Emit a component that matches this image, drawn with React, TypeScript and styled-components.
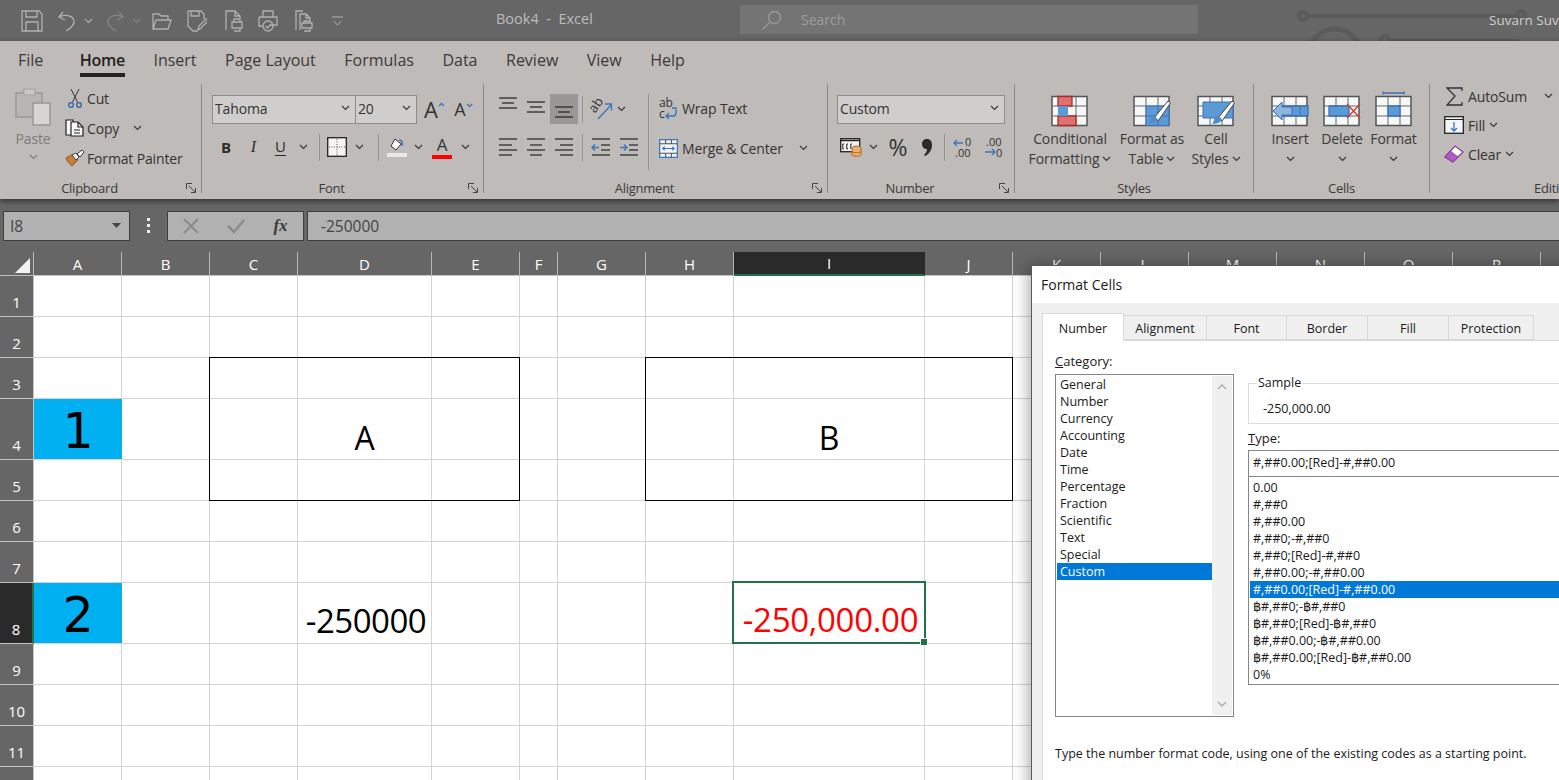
import React from 'react';
import styled, { createGlobalStyle } from 'styled-components';

const uiFont = '"Open Sans", "Noto Sans", sans-serif';

const GlobalStyle = createGlobalStyle`
  html, body { margin: 0; padding: 0; background: #666; }
  body { font-family: ${uiFont}; }
  * { box-sizing: border-box; }
`;

const Page = styled.div`
  position: relative;
  width: 1559px;
  height: 780px;
  overflow: hidden;
  display: flex;
  flex-direction: column;
  background: #666;
`;

/* title bar */
const TitleBar = styled.div`
  position: relative;
  height: 41px;
  flex: none;
  display: flex;
  align-items: center;
  background: #666;
  color: #c4c4c4;
`;
const Qat = styled.div`
  width: 490px;
  flex: none;
  display: flex;
  align-items: center;
  padding-left: 20px;
  height: 100%;
`;
const QatIcon = styled.span<{ $w: number; $ml?: number }>`
  width: ${p => p.$w}px;
  margin-left: ${p => p.$ml ?? 0}px;
  flex: none;
  display: flex;
  justify-content: center;
  align-items: center;
`;
const DocTitle = styled.div`
  width: 250px;
  flex: none;
  padding: 0 0 5px 6px;
  font-size: 14.5px;
  color: #bcbcbc;
  white-space: pre;
`;
const SearchBox = styled.div`
  width: 458px;
  height: 29px;
  flex: none;
  margin-bottom: 2px;
  background: #747474;
  display: flex;
  align-items: center;
  padding-left: 22px;
  gap: 19px;
  color: #9d9d9d;
  font-size: 14px;
`;
const UserName = styled.div`
  margin-left: 291px;
  padding-bottom: 1px;
  font-size: 13.5px;
  white-space: nowrap;
  color: #cfcfcf;
  z-index: 1;
`;
const Circuit = styled.svg`
  position: absolute;
  left: 1280px;
  top: 0;
`;

/* ribbon */
const Ribbon = styled.div`
  height: 158px;
  flex: none;
  background: #bfbbb8;
  color: #333;
  box-shadow: 0 2px 6px rgba(0, 0, 0, 0.55);
  position: relative;
  z-index: 2;
`;
const TabRow = styled.div`
  height: 39px;
  display: flex;
  padding-left: 18px;
  gap: 28.5px;
`;
const RibbonTab = styled.div<{ $active?: boolean }>`
  height: 36px;
  padding-top: 1px;
  line-height: 36px;
  font-size: 16px;
  margin-left: ${p => (p.$active ? '8px' : '0')};
  color: ${p => (p.$active ? '#222' : '#3a3a3a')};
  font-weight: ${p => (p.$active ? 600 : 400)};
  letter-spacing: ${p => (p.$active ? '-0.3px' : '0')};
  border-bottom: ${p => (p.$active ? '4px solid #222' : 'none')};
`;
const Groups = styled.div`
  display: flex;
  padding-top: 4px;
  height: 115px;
`;
const Group = styled.div<{ $w: number; $last?: boolean }>`
  width: ${p => p.$w}px;
  flex: none;
  height: 109px;
  display: flex;
  flex-direction: column;
  border-right: ${p => (p.$last ? 'none' : '1px solid #8b8987')};
`;
const GroupBody = styled.div<{ $pad?: number }>`
  flex: 1;
  min-height: 0;
  display: flex;
  padding-left: ${p => p.$pad ?? 10}px;
`;
const GroupFooter = styled.div`
  height: 19px;
  padding-top: 9px;
  display: flex;
  align-items: center;
  font-size: 13px;
  letter-spacing: -0.25px;
  color: #3a3a3a;
`;
const GroupName = styled.div<{ $inset?: number }>`
  flex: 1;
  text-align: ${p => (p.$inset ? 'left' : 'center')};
  padding-left: ${p => p.$inset ?? 0}px;
  white-space: nowrap;
`;
const Launcher = styled.svg`
  width: 22px;
  flex: none;
  padding: 0 5px 0 7px;
`;
const Stack = styled.div<{ $w?: number }>`
  width: ${p => (p.$w ? `${p.$w}px` : 'auto')};
  flex: none;
  display: flex;
  flex-direction: column;
  padding-top: 10px;
  gap: 8px;
`;
const ToolRow = styled.div<{ $shift?: number }>`
  display: flex;
  align-items: center;
  height: 30px;
  margin-left: ${p => p.$shift ?? 0}px;
`;
const Tool = styled.div<{ $w?: number; $on?: boolean }>`
  width: ${p => (p.$w ? `${p.$w}px` : 'auto')};
  height: 30px;
  flex: none;
  display: flex;
  align-items: center;
  justify-content: center;
  background: ${p => (p.$on ? '#9a9896' : 'transparent')};
`;
const Divider = styled.div<{ $h?: number; $mx?: number }>`
  width: 1px;
  height: ${p => p.$h ?? 27}px;
  flex: none;
  margin: 0 ${p => p.$mx ?? 7}px;
  background: #979593;
`;
const TallDivider = styled(Divider)`
  margin: 10px 0 0 0;
`;
const RightTools = styled.div`
  flex: none;
  display: flex;
  flex-direction: column;
  padding: 10px 0 0 10px;
  gap: 8px;
`;
const TextTool = styled.div`
  height: 30px;
  display: flex;
  align-items: center;
  gap: 4px;
  padding-bottom: 1px;
  font-size: 14px;
  letter-spacing: -0.15px;
  white-space: nowrap;
`;
const MergeTool = styled(TextTool)`
  padding: 2px 0 0;
`;
const Chevron: React.FC<{ c?: string }> = ({ c = '#3a3a3a' }) => (
  <svg width="9" height="6" viewBox="0 0 9 6" style={{ flex: 'none' }}>
    <path d="M1 1l3.500 3.500L8 1" fill="none" stroke={c} strokeWidth="1.200" />
  </svg>
);
const LauncherIcon = () => (
  <Launcher viewBox="0 0 10 10" height="10">
    <path d="M.5 6V.5H6M3 3l6 6M5 9.500h4.500V5" fill="none" stroke="#444" strokeWidth="1" />
  </Launcher>
);

const PasteColumn = styled.div`
  width: 38px;
  flex: none;
  display: flex;
  flex-direction: column;
  align-items: center;
  padding-top: 4px;
  color: #7e7c7a;
  font-size: 14px;
  letter-spacing: -0.15px;
  line-height: 20px;
`;
const PasteLabel = styled.span`
  margin-top: 3px;
`;
const PasteChevron = styled.span`
  margin-top: 1px;
  line-height: 10px;
`;
const ClipRows = styled.div`
  margin: -1px 0 0 10px;
  display: flex;
  flex-direction: column;
`;
const ClipRow = styled.div`
  height: 30px;
  display: flex;
  align-items: center;
  font-size: 14px;
  letter-spacing: -0.15px;
  white-space: nowrap;
`;
const ClipIcon = styled.span`
  width: 25px;
  flex: none;
  display: flex;
  justify-content: center;
`;
const ChevronGap = styled.span<{ $ml: number }>`
  margin-left: ${p => p.$ml}px;
  display: flex;
`;
const Combo = styled.div<{ $w: number }>`
  width: ${p => p.$w}px;
  height: 29px;
  flex: none;
  display: flex;
  align-items: center;
  justify-content: space-between;
  padding: 0 5px 2px 2px;
  background: #cfcecd;
  border: 1px solid #8f8d8b;
  margin-right: -1px;
  font-size: 14px;
  letter-spacing: -0.15px;
  color: #333;
`;
const Spacer = styled.span<{ $w: number }>`
  width: ${p => p.$w}px;
  flex: none;
`;
const FontSizer = styled.div<{ $size: number }>`
  width: 29px;
  flex: none;
  display: flex;
  align-items: flex-start;
  justify-content: center;
  font-size: ${p => p.$size}px;
  line-height: 24px;
  color: #333;
`;
const BoldGlyph = styled.span`
  font: 700 15px ${uiFont};
  color: #2c2c2c;
`;
const ItalicGlyph = styled.span`
  font: italic 400 16px "Liberation Serif", serif;
  color: #2c2c2c;
`;
const UnderGlyph = styled.span`
  font-size: 15px;
  line-height: 17px;
  border-bottom: 1px solid #2c2c2c;
  color: #2c2c2c;
`;
const ColorA = styled.div<{ $bar: string; $w: number }>`
  width: ${p => p.$w}px;
  display: flex;
  flex-direction: column;
  align-items: center;
  font-size: 17px;
  line-height: 20px;
  color: #333;
  border-bottom: 4px solid ${p => p.$bar};
`;
const BigButton = styled.div<{ $w: number }>`
  width: ${p => p.$w}px;
  flex: none;
  display: flex;
  flex-direction: column;
  align-items: center;
  padding-top: 8px;
  font-size: 14px;
  letter-spacing: -0.1px;
  line-height: 20px;
  color: #3a3a3a;
  white-space: nowrap;
`;
const BigIcon = styled.div`
  height: 37px;
  display: flex;
  align-items: flex-start;
`;
const BigLine = styled.div`
  display: flex;
  align-items: center;
  gap: 3px;
  height: 20px;
`;
const EditRows = styled.div`
  width: 100%;
  display: flex;
  flex-direction: column;
  gap: 5px;
`;
const EditRow = styled.div`
  height: 24px;
  display: flex;
  align-items: center;
  font-size: 14px;
  letter-spacing: -0.15px;
  gap: 4px;
  white-space: nowrap;
`;
const EditIcon = styled.span`
  width: 20px;
  flex: none;
  display: flex;
  justify-content: center;
`;
const Percent = styled.span`
  font-size: 23px;
  line-height: 24px;
  color: #333;
`;

/* formula bar */
const FormulaBar = styled.div`
  height: 53px;
  flex: none;
  display: flex;
  align-items: center;
  padding-left: 3px;
`;
const FieldBox = styled.div<{ $w: number; $ml?: number }>`
  width: ${p => p.$w}px;
  margin-left: ${p => p.$ml ?? 0}px;
  height: 30px;
  flex: none;
  display: flex;
  align-items: center;
  background: #b1b1b1;
  border: 1px solid #3f3f3f;
  color: #444;
  font-size: 15.5px;
`;
const NameText = styled.span`
  flex: 1;
  padding-left: 6px;
`;
const GripDots = styled.div`
  width: 37px;
  flex: none;
  display: flex;
  flex-direction: column;
  align-items: center;
  gap: 3px;
  i {
    width: 3px;
    height: 3px;
    background: #eee;
  }
`;
const FxButton = styled.span`
  width: 45px;
  flex: none;
  display: flex;
  justify-content: center;
`;
const FxGlyph = styled.span`
  font: italic 700 17px "Liberation Serif", serif;
  color: #3a3a3a;
`;
const FormulaText = styled.span`
  padding-left: 13px;
`;

/* sheet */
const colWidths = [34, 88, 88, 88, 134, 88, 38, 88, 88, 191, 88, 88, 88, 88, 88, 88, 88, 88];
const rowHeights = [24, 41, 41, 41, 61, 41, 41, 41, 61, 41, 41, 41, 41];
const colNames = 'ABCDEFGHIJKLMNOPQ'.split('');

const SheetGrid = styled.div`
  flex: none;
  display: grid;
  grid-template-columns: ${colWidths.map(w => `${w}px`).join(' ')};
  grid-template-rows: ${rowHeights.map(h => `${h}px`).join(' ')};
  background: #fff;
`;
const Corner = styled.div`
  grid-column: 1;
  grid-row: 1;
  background: #666;
  border-right: 1px solid #bdbdbd;
  border-bottom: 1px solid #bdbdbd;
  display: flex;
  align-items: flex-end;
  justify-content: flex-end;
  padding: 0 3px 2px 0;
`;
const ColHead = styled.div<{ $c: number; $on?: boolean }>`
  grid-column: ${p => p.$c};
  grid-row: 1;
  display: flex;
  align-items: center;
  justify-content: center;
  font-size: 15px;
  color: #fff;
  background: ${p => (p.$on ? '#2a2a2a' : '#666')};
  border-right: 1px solid ${p => (p.$on ? '#2a2a2a' : '#b5b5b5')};
  border-bottom: ${p => (p.$on ? '2px solid #217346' : '1px solid #c4c4c4')};
`;
const RowHead = styled.div<{ $r: number; $on?: boolean }>`
  grid-column: 1;
  grid-row: ${p => p.$r};
  display: flex;
  align-items: flex-end;
  justify-content: center;
  padding-bottom: 4px;
  font-size: 15px;
  color: #fff;
  background: ${p => (p.$on ? '#2a2a2a' : '#666')};
  border-bottom: 1px solid #c4c4c4;
  border-right: ${p => (p.$on ? '2px solid #217346' : '1px solid #c4c4c4')};
`;
const Cell = styled.div<{ $c: number; $r: number }>`
  grid-column: ${p => p.$c};
  grid-row: ${p => p.$r};
  border-right: 1px solid #d4d4d4;
  border-bottom: 1px solid #d4d4d4;
`;
const Filled = styled.div<{ $r: number }>`
  grid-column: 2;
  grid-row: ${p => p.$r};
  background: #00b0f0;
  display: flex;
  align-items: center;
  justify-content: center;
  padding-top: 4px;
  font: 49px "DejaVu Sans", sans-serif;
  color: #000;
  margin-bottom: 1px;
  z-index: 1;
`;
const OutlineBox = styled.div<{ $from: number; $to: number }>`
  grid-column: ${p => p.$from} / ${p => p.$to};
  grid-row: 4 / 7;
  margin: -1px 0 0 -1px;
  border: 1px solid #000;
  display: flex;
  align-items: center;
  justify-content: center;
  padding-top: 16px;
  font-size: 32px;
  color: #000;
  z-index: 1;
`;
const NumberCell = styled.div<{ $c: number }>`
  grid-column: ${p => p.$c};
  grid-row: 9;
  display: flex;
  align-items: center;
  justify-content: center;
  padding: 13px 0 0 2px;
  font-size: 33px;
  letter-spacing: -0.5px;
  white-space: nowrap;
  z-index: 1;
`;
const SelectedCell = styled(NumberCell)`
  position: relative;
  margin: -2px -1px 0 -2px;
  border: 2px solid #217346;
  color: #ff0000;
  padding: 14px 0 0 3px;
  letter-spacing: -0.3px;
  z-index: 2;
`;
const FillHandle = styled.i`
  position: absolute;
  right: -3px;
  bottom: -3px;
  width: 6px;
  height: 6px;
  background: #217346;
  outline: 1px solid #fff;
`;

/* format cells dialog */
const Dialog = styled.div`
  position: absolute;
  left: 1031px;
  top: 265px;
  width: 620px;
  height: 540px;
  background: #f0f0f0;
  border-left: 1px solid #5a5a5a;
  border-top: 1px solid #5a5a5a;
  box-shadow: -3px 0 14px rgba(0, 0, 0, 0.32);
  font-size: 13px;
  color: #1a1a1a;
  z-index: 3;
  display: flex;
  flex-direction: column;
`;
const DialogTitle = styled.div`
  height: 37px;
  flex: none;
  background: #fff;
  padding: 0 0 0 9px;
  line-height: 37px;
  font-size: 14px;
`;
const DialogTabs = styled.div`
  display: flex;
  align-items: flex-end;
  height: 37px;
  flex: none;
  padding-left: 10px;
  position: relative;
  z-index: 1;
`;
const DialogTab = styled.div<{ $w: number; $on?: boolean }>`
  width: ${p => p.$w}px;
  height: ${p => (p.$on ? 28 : 25)}px;
  margin-bottom: ${p => (p.$on ? -1 : 0)}px;
  flex: none;
  display: flex;
  align-items: center;
  justify-content: center;
  background: ${p => (p.$on ? '#fff' : '#f0f0f0')};
  border: 1px solid #d9d9d9;
  border-left: ${p => (p.$on ? '1px solid #d9d9d9' : 'none')};
  border-bottom: ${p => (p.$on ? 'none' : '1px solid #d9d9d9')};
  font-size: 12.5px;
  padding-top: 1px;
`;
const TabPanel = styled.div`
  flex: 1;
  margin-left: 10px;
  background: #fff;
  border-top: 1px solid #d9d9d9;
  border-left: 1px solid #d9d9d9;
  display: flex;
  flex-direction: column;
  padding: 12px 0 0 12px;
`;
const PanelColumns = styled.div`
  display: flex;
  gap: 14px;
  height: 376px;
`;
const CategoryColumn = styled.div`
  width: 179px;
  flex: none;
`;
const FieldLabel = styled.div`
  height: 22px;
  font-size: 13px;
  line-height: 16px;
  u { text-decoration: underline; }
`;
const ListFrame = styled.div`
  height: 343px;
  margin-top: -1px;
  border: 1px solid #82878c;
  display: flex;
  padding: 1px;
  background: #fff;
`;
const ListBody = styled.div`
  flex: 1;
  display: flex;
  flex-direction: column;
`;
const ListItem = styled.div<{ $pad: number; $on?: boolean }>`
  height: 17px;
  flex: none;
  line-height: 17px;
  padding-left: ${p => p.$pad}px;
  font-size: 12.5px;
  white-space: nowrap;
  background: ${p => (p.$on ? '#0078d7' : 'transparent')};
  color: ${p => (p.$on ? '#fff' : '#1a1a1a')};
`;
const ScrollTrack = styled.div`
  width: 20px;
  flex: none;
  background: #f0f0f0;
  display: flex;
  flex-direction: column;
  align-items: center;
  justify-content: space-between;
  padding: 8px 0;
`;
const TypeColumn = styled.div`
  flex: 1;
  display: flex;
  flex-direction: column;
  padding-top: 30px;
`;
const SampleSet = styled.fieldset`
  margin: 0;
  height: 41px;
  flex: none;
  padding: 0 0 0 14px;
  border: 1px solid #dcdcdc;
  font-size: 12.5px;
  legend {
    margin-left: -6px;
    padding: 0 1px;
    height: 0;
    line-height: 0;
    font-size: 12.5px;
    transform: translateY(-1px);
  }
  div {
    line-height: 50px;
    height: 39px;
  }
`;
const TypeLabel = styled(FieldLabel)`
  height: 26px;
  padding-top: 5px;
  line-height: 18px;
  flex: none;
`;
const TypeInput = styled.div`
  height: 27px;
  flex: none;
  border: 1px solid #82878c;
  line-height: 24px;
  padding-left: 4px;
  font-size: 12.5px;
`;
const TypeList = styled.div`
  height: 209px;
  flex: none;
  margin-top: -1px;
  border: 1px solid #82878c;
  padding: 2px 1px 0;
  display: flex;
  flex-direction: column;
`;
const HelpText = styled.div`
  margin-top: 16px;
  font-size: 12.5px;
  white-space: nowrap;
`;

const grey = '#b0b0b0';

const GridIcon: React.FC<{ children?: React.ReactNode; w?: number }> = ({ children, w = 40 }) => (
  <svg width={w} height="35" viewBox="0 0 40 35" style={{ overflow: 'visible' }}>
    <rect x="2" y="4.500" width="35" height="29" fill="#f6f8f8" stroke="#555" strokeWidth="1.500" />
    <path d="M2 14h35M2 24h35M14 4.500v29M26 4.500v29" stroke="#666" strokeWidth="1" fill="none" />
    {children}
  </svg>
);
const Brush = () => (
  <g>
    <path d="M22 26L36 9l2.500 2L26 29z" fill="#fff" stroke="#444" strokeWidth="1" />
    <path d="M19 24c3 0 6 1 7 4-2 3-6 4-10 4 2-2 2-5 3-8z" fill="#4f8ecb" />
  </g>
);
/* lines are given in pixels from the top of the 30px tool they sit in */
const LinesIcon: React.FC<{ lines: [number, number, number][]; w?: number; c?: string; children?: React.ReactNode }> = ({ lines, w = 1.300, c = '#2a2a2a', children }) => (
  <svg width="20" height="30" viewBox="0 0 20 30" fill="none">
    {lines.map(([a, b, y], i) => (
      <path key={i} d={`M${a} ${y}H${b}`} stroke={c} strokeWidth={w} />
    ))}
    {children}
  </svg>
);
const rowLines = (xs: [number, number][]): [number, number, number][] =>
  xs.map(([a, b], i) => [a, b, [7, 13, 18, 23][i]]);

const Qa: React.FC<{ w?: number; children: React.ReactNode }> = ({ w = 20, children }) => (
  <svg width={w} height="22" viewBox={`0 0 ${w} 22`} fill="none" stroke={grey} strokeWidth="1.300">
    {children}
  </svg>
);

const categories = ['General', 'Number', 'Currency', 'Accounting', 'Date', 'Time', 'Percentage', 'Fraction', 'Scientific', 'Text', 'Special', 'Custom'];
const formats = [
  '0.00', '#,##0', '#,##0.00', '#,##0;-#,##0', '#,##0;[Red]-#,##0', '#,##0.00;-#,##0.00',
  '#,##0.00;[Red]-#,##0.00', '฿#,##0;-฿#,##0', '฿#,##0;[Red]-฿#,##0', '฿#,##0.00;-฿#,##0.00',
  '฿#,##0.00;[Red]-฿#,##0.00', '0%',
];
const dialogTabs: [string, number][] = [['Alignment', 83], ['Font', 80], ['Border', 81], ['Fill', 81], ['Protection', 85]];
const ribbonTabs = ['File', 'Home', 'Insert', 'Page Layout', 'Formulas', 'Data', 'Review', 'View', 'Help'];

const App: React.FC = () => (
  <Page>
    <GlobalStyle />
    <TitleBar>
      <Qat>
        <QatIcon $w={24}><Qa w={22}><path d="M1 1h17l3 3v17H1zM5 1v6h11V1M5 21v-9h12v9" /></Qa></QatIcon>
        <QatIcon $w={20} $ml={13}><Qa><path d="M6 2L2 7l6 3M2 7c5-3 14-2 15 4 .5 4-3 7-8 10" /></Qa></QatIcon>
        <QatIcon $w={10} $ml={6}><Chevron c="#aaa" /></QatIcon>
        <QatIcon $w={20} $ml={12}><Qa><path stroke="#858585" d="M14 2l4 5-6 3M18 7C13 4 4 5 3 11c-.5 4 3 7 8 10" /></Qa></QatIcon>
        <QatIcon $w={10} $ml={6}><Chevron c="#858585" /></QatIcon>
        <QatIcon $w={20} $ml={11}><Qa><path d="M1 19V4h6l2 2h7v4M1 19l3-9h15l-3 9z" /></Qa></QatIcon>
        <QatIcon $w={20} $ml={15}><Qa><path d="M1 1h13l3 3v5M1 1v15l5 5h5M4 1v5h8V1M11 20l1-4 7-7 2 2-7 7z" /></Qa></QatIcon>
        <QatIcon $w={20} $ml={17}><Qa><path d="M2 20V1h9l5 5v4M11 1v5h5M8 12h10v6H8zM10 12V9h6v3M10 21h6v-3" /></Qa></QatIcon>
        <QatIcon $w={20} $ml={14}><Qa><path d="M5 7V1h10v6M1 7h18v8h-7M1 7v9h4" /><circle cx="10" cy="16" r="5" /><path d="M7.500 16l2 2 3-3.500" /></Qa></QatIcon>
        <QatIcon $w={20} $ml={16}><Qa><path d="M2 20V1h7M6 20V4h6l4 4v3M12 4v4h4M8 13h10v5H8zM10 13v-2h6v2M10 21h6v-3" /></Qa></QatIcon>
        <QatIcon $w={11} $ml={18}><svg width="11" height="10" viewBox="0 0 11 10" fill="none" stroke={grey}><path d="M0 1h11M1.500 5l4 4 4-4" /></svg></QatIcon>
      </Qat>
      <DocTitle>{'Book4  -  Excel'}</DocTitle>
      <SearchBox>
        <svg width="20" height="20" viewBox="0 0 20 20" fill="none" stroke="#999" strokeWidth="1.300">
          <circle cx="12.500" cy="7.500" r="6" /><path d="M8 12l-7 7" />
        </svg>
        Search
      </SearchBox>
      <Circuit width="280" height="41" viewBox="0 0 280 41" fill="none" stroke="#5b5b5b" strokeWidth="4">
        <circle cx="23" cy="16" r="4" />
        <path d="M27 16h210" />
        <circle cx="241" cy="15" r="4" />
        <circle cx="55" cy="55" r="26" strokeWidth="5" />
        <circle cx="105" cy="40" r="4" />
        <path d="M109 41h130" />
      </Circuit>
      <UserName>Suvarn Suv</UserName>
    </TitleBar>

    <Ribbon>
      <TabRow>
        {ribbonTabs.map(t => <RibbonTab key={t} $active={t === 'Home'}>{t}</RibbonTab>)}
      </TabRow>
      <Groups>
        <Group $w={202}>
          <GroupBody $pad={14}>
            <PasteColumn>
              <svg width="36" height="38" viewBox="0 0 36 38">
                <path d="M1 5h8V2h10v3h8v24H1z" fill="#b8b6b3" stroke="#a3a19f" strokeWidth="2" />
                <rect x="9" y="1" width="11" height="6" fill="#c9c7c5" stroke="#a3a19f" />
                <rect x="18" y="15" width="17" height="22" fill="#d6d5d3" stroke="#9a9896" strokeWidth="1.500" />
              </svg>
              <PasteLabel>Paste</PasteLabel>
              <PasteChevron><Chevron c="#7e7c7a" /></PasteChevron>
            </PasteColumn>
            <ClipRows>
              <ClipRow>
                <ClipIcon>
                  <svg width="14" height="20" viewBox="0 0 14 20" fill="none" stroke="#333">
                    <path d="M3 1l6.500 13M11 1L4.500 14" />
                    <circle cx="3" cy="17" r="2.300" stroke="#2d5fa8" strokeWidth="1.300" />
                    <circle cx="11" cy="17" r="2.300" stroke="#2d5fa8" strokeWidth="1.300" />
                  </svg>
                </ClipIcon>Cut
              </ClipRow>
              <ClipRow>
                <ClipIcon>
                  <svg width="20" height="18" viewBox="0 0 20 18" fill="#f7f7f7" stroke="#222" strokeWidth="1.200">
                    <path d="M1 1h7v15H1z" /><path d="M6 3h7l5 5v9H6z" /><path d="M13 3v5h5M9 11h6M9 14h6" fill="none" />
                  </svg>
                </ClipIcon>Copy
                <ChevronGap $ml={14}><Chevron /></ChevronGap>
              </ClipRow>
              <ClipRow>
                <ClipIcon>
                  <svg width="20" height="18" viewBox="0 0 20 18">
                    <path d="M1 9l7-4 5 6-6 6C6 16 2 13 1 9z" fill="#c57f3c" stroke="#8a5a2a" />
                    <path d="M7 6l4-2 3 4-3 3z" fill="#f4f4f4" stroke="#444" />
                    <path d="M12 5l5-4 2 2-4 5z" fill="#fff" stroke="#333" />
                  </svg>
                </ClipIcon>Format Painter
              </ClipRow>
            </ClipRows>
          </GroupBody>
          <GroupFooter><GroupName>Clipboard</GroupName><LauncherIcon /></GroupFooter>
        </Group>

        <Group $w={282}>
          <GroupBody $pad={10}>
            <Stack>
              <ToolRow>
                <Combo $w={144}>Tahoma<Chevron /></Combo>
                <Combo $w={62}>20<Chevron /></Combo>
                <Spacer $w={4} />
                <FontSizer $size={22}>A<svg width="7" height="6" viewBox="0 0 7 6" style={{ marginTop: 5 }}><path d="M1 4l2.500-2.500L6 4" fill="none" stroke="#3b74bd" strokeWidth="1.300" /></svg></FontSizer>
                <FontSizer $size={18}>A<svg width="7" height="6" viewBox="0 0 7 6" style={{ marginTop: 5 }}><path d="M1 2l2.500 2.500L6 2" fill="none" stroke="#3b74bd" strokeWidth="1.300" /></svg></FontSizer>
              </ToolRow>
              <ToolRow>
                <Tool $w={28}><BoldGlyph>B</BoldGlyph></Tool>
                <Tool $w={27}><ItalicGlyph>I</ItalicGlyph></Tool>
                <Tool $w={27}><UnderGlyph>U</UnderGlyph></Tool>
                <Tool $w={18}><Chevron /></Tool>
                <Divider $mx={7} />
                <Tool $w={20}>
                  <svg width="20" height="20" viewBox="0 0 20 20">
                    <rect x=".7" y=".7" width="18.600" height="18.600" fill="#f5f5f5" stroke="#222" strokeWidth="1.300" />
                    <path d="M10 2v16M2 10h16" stroke="#555" strokeDasharray="1 1.500" />
                  </svg>
                </Tool>
                <Tool $w={24}><Chevron /></Tool>
                <Divider $mx={7} />
                <Tool $w={22}>
                  <ColorA $bar="#e8e8e8" $w={20}>
                    <svg width="18" height="16" viewBox="0 0 18 16">
                      <path d="M7 2l6 5-5 6-5-4z" fill="#fff" stroke="#333" />
                      <path d="M11 3c3 0 4 3 3 6" fill="none" stroke="#3a6fb5" strokeWidth="1.500" />
                    </svg>
                  </ColorA>
                </Tool>
                <Tool $w={20}><Chevron /></Tool>
                <Tool $w={28}><ColorA $bar="#f00" $w={20}>A</ColorA></Tool>
                <Tool $w={18}><Chevron /></Tool>
              </ToolRow>
            </Stack>
          </GroupBody>
          <GroupFooter><GroupName>Font</GroupName><LauncherIcon /></GroupFooter>
        </Group>

        <Group $w={344}>
          <GroupBody $pad={10}>
            <Stack $w={154}>
              <ToolRow>
                <Tool $w={28}><LinesIcon lines={[[1, 19, 4], [4, 16, 9], [1, 19, 14]]} /></Tool>
                <Tool $w={28}><LinesIcon lines={[[1, 19, 8], [4, 16, 13], [1, 19, 18]]} /></Tool>
                <Tool $w={28} $on><LinesIcon lines={[[1, 19, 13], [4, 16, 18], [1, 19, 23]]} /></Tool>
                <Divider $mx={4} />
                <Tool $w={28}>
                  <svg width="24" height="24" viewBox="0 0 24 24" fill="none" style={{ overflow: 'visible' }}>
                    <text x="1" y="13" fontSize="13" fill="#333" transform="rotate(-55 7 10)" fontFamily={uiFont}>ab</text>
                    <path d="M9 22L22 8M16 7h6.500v6.500" stroke="#3b74bd" strokeWidth="1.300" />
                  </svg>
                </Tool>
                <Tool $w={12}><Chevron /></Tool>
              </ToolRow>
              <ToolRow>
                <Tool $w={28}><LinesIcon c="#4a4a4a" w={1.600} lines={rowLines([[1, 19], [1, 14], [1, 19], [1, 14]])} /></Tool>
                <Tool $w={28}><LinesIcon c="#4a4a4a" w={1.600} lines={rowLines([[1, 19], [4, 16], [1, 19], [4, 16]])} /></Tool>
                <Tool $w={28}><LinesIcon c="#4a4a4a" w={1.600} lines={rowLines([[1, 19], [6, 19], [1, 19], [6, 19]])} /></Tool>
                <Divider $mx={4} />
                <Tool $w={28}>
                  <LinesIcon c="#4a4a4a" w={1.600} lines={rowLines([[1, 19], [10, 19], [10, 19], [1, 19]])}>
                    <path d="M8 15.500H1M4 12.500l-3 3 3 3" stroke="#3b74bd" strokeWidth="1.400" />
                  </LinesIcon>
                </Tool>
                <Tool $w={28}>
                  <LinesIcon c="#4a4a4a" w={1.600} lines={rowLines([[1, 19], [10, 19], [10, 19], [1, 19]])}>
                    <path d="M1 15.500h7M5 12.500l3 3-3 3" stroke="#3b74bd" strokeWidth="1.400" />
                  </LinesIcon>
                </Tool>
              </ToolRow>
            </Stack>
            <TallDivider $h={76} />
            <RightTools>
              <TextTool>
                <svg width="19" height="24" viewBox="0 0 19 24" style={{ overflow: 'visible' }}>
                  <text x="0" y="10" fontSize="12" fill="#333" fontFamily={uiFont}>ab</text>
                  <text x="0" y="21" fontSize="12" fill="#333" fontFamily={uiFont}>c</text>
                  <path d="M13 11h4v5c0 2-1 3-3 3H7M10 16l-3 3 3 3" fill="none" stroke="#3b74bd" strokeWidth="1.300" />
                </svg>
                Wrap Text
              </TextTool>
              <MergeTool>
                <svg width="19" height="19" viewBox="0 0 20 20">
                  <rect x=".7" y=".7" width="18.600" height="18.600" fill="#f2f5f8" stroke="#3b74bd" strokeWidth="1.300" />
                  <path d="M1 5h18M1 15h18M7 1v4M13 1v4M7 15v4M13 15v4" stroke="#444" />
                  <path d="M4 10h12M6 8l-2 2 2 2M14 8l2 2-2 2" fill="none" stroke="#3b74bd" strokeWidth="1.200" />
                </svg>
                Merge &amp; Center
                <ChevronGap $ml={12}><Chevron /></ChevronGap>
              </MergeTool>
            </RightTools>
          </GroupBody>
          <GroupFooter><GroupName>Alignment</GroupName><LauncherIcon /></GroupFooter>
        </Group>

        <Group $w={187}>
          <GroupBody $pad={9}>
            <Stack>
              <ToolRow><Combo $w={168}>Custom<Chevron /></Combo></ToolRow>
              <ToolRow $shift={-1}>
                <Tool $w={30}>
                  <svg width="22" height="20" viewBox="0 0 22 20">
                    <rect x=".7" y="1.700" width="19" height="13" fill="#f4f4f4" stroke="#222" strokeWidth="1.300" />
                    <path d="M1 3.500h18" stroke="#222" strokeWidth="1.500" />
                    <path d="M4 7H2.800v5H4M8 7H6.800v5H8M12 7h-1.200v5" fill="none" stroke="#222" />
                    <ellipse cx="16.500" cy="11" rx="4.500" ry="2" fill="#e7ae75" stroke="#b5651d" />
                    <path d="M12 11v7c0 1.500 9 1.500 9 0v-7M12 14.500c0 1.500 9 1.500 9 0" fill="#e7ae75" stroke="#b5651d" />
                  </svg>
                </Tool>
                <Tool $w={14}><Chevron /></Tool>
                <Tool $w={36}><Percent>%</Percent></Tool>
                <Tool $w={21}>
                  <svg width="10" height="17" viewBox="0 0 10 17"><path d="M5 0c3 0 5 2 5 6 0 5-3 9-7 11l-1-1c2-2 3-4 3-6C2 10 0 8 0 5s2-5 5-5z" fill="#2a2a2a" /></svg>
                </Tool>
                <Divider $mx={7} />
                <Tool $w={21}>
                  <svg width="20" height="22" viewBox="0 0 20 22">
                    <text x="12" y="10" fontSize="11" fill="#333" fontFamily={uiFont}>0</text>
                    <text x="2" y="21" fontSize="11" fill="#333" fontFamily={uiFont}>.00</text>
                    <path d="M10 7H1M4 4L1 7l3 3" fill="none" stroke="#3b74bd" strokeWidth="1.300" />
                  </svg>
                </Tool>
                <Spacer $w={10} />
                <Tool $w={21}>
                  <svg width="20" height="22" viewBox="0 0 20 22">
                    <text x="2" y="10" fontSize="11" fill="#333" fontFamily={uiFont}>.00</text>
                    <text x="12" y="21" fontSize="11" fill="#333" fontFamily={uiFont}>0</text>
                    <path d="M1 16h10M8 13l3 3-3 3" fill="none" stroke="#3b74bd" strokeWidth="1.300" />
                  </svg>
                </Tool>
              </ToolRow>
            </Stack>
          </GroupBody>
          <GroupFooter><GroupName>Number</GroupName><LauncherIcon /></GroupFooter>
        </Group>

        <Group $w={239}>
          <GroupBody $pad={7}>
            <BigButton $w={96}>
              <BigIcon>
                <GridIcon>
                  <path d="M8 4.500h14V14H8zM8 24h18v9.500H8z" fill="#e07070" stroke="#a92c2c" strokeWidth="1.300" />
                  <path d="M8 14h10v10H8z" fill="#5b9bd5" />
                </GridIcon>
              </BigIcon>
              <BigLine>Conditional</BigLine>
              <BigLine>Formatting <Chevron /></BigLine>
            </BigButton>
            <BigButton $w={68}>
              <BigIcon>
                <GridIcon>
                  <path d="M14 14h23v19.500H14z" fill="#5b9bd5" stroke="#3e6eb5" />
                  <path d="M14 24h23M26 14v19" stroke="#3e6eb5" />
                  <Brush />
                </GridIcon>
              </BigIcon>
              <BigLine>Format as</BigLine>
              <BigLine>Table <Chevron /></BigLine>
            </BigButton>
            <BigButton $w={60}>
              <BigIcon>
                <GridIcon>
                  <path d="M7 10h30v16H7z" fill="#5b9bd5" stroke="#3e6eb5" />
                  <Brush />
                </GridIcon>
              </BigIcon>
              <BigLine>Cell</BigLine>
              <BigLine>Styles <Chevron /></BigLine>
            </BigButton>
          </GroupBody>
          <GroupFooter><GroupName>Styles</GroupName></GroupFooter>
        </Group>

        <Group $w={176}>
          <GroupBody $pad={10}>
            <BigButton $w={52}>
              <BigIcon>
                <GridIcon>
                  <path d="M10 14h28v10H10z" fill="#5b9bd5" stroke="#3e6eb5" strokeWidth="1.300" />
                  <path d="M21 14v10M30 14v10" stroke="#3e6eb5" />
                  <path d="M12 10l-9 9 9 9v-5h10v-8H12z" fill="#8cb6e0" stroke="#3e6eb5" />
                </GridIcon>
              </BigIcon>
              <BigLine>Insert</BigLine>
              <BigLine><Chevron /></BigLine>
            </BigButton>
            <BigButton $w={52}>
              <BigIcon>
                <GridIcon>
                  <path d="M7 14h20v10H7z" fill="#5b9bd5" stroke="#3e6eb5" strokeWidth="1.300" />
                  <path d="M25 12l13 14M38 12L25 26" stroke="#d13f2e" strokeWidth="1.500" />
                </GridIcon>
              </BigIcon>
              <BigLine>Delete</BigLine>
              <BigLine><Chevron /></BigLine>
            </BigButton>
            <BigButton $w={51}>
              <BigIcon>
                <GridIcon>
                  <path d="M14 14h12v10H14z" fill="#5b9bd5" stroke="#3e6eb5" strokeWidth="1.300" />
                  <path d="M9 1h21M9 -.5v3M30 -.5v3" stroke="#3e6eb5" strokeWidth="1.300" />
                </GridIcon>
              </BigIcon>
              <BigLine>Format</BigLine>
              <BigLine><Chevron /></BigLine>
            </BigButton>
          </GroupBody>
          <GroupFooter><GroupName>Cells</GroupName></GroupFooter>
        </Group>

        <Group $w={130} $last>
          <GroupBody $pad={14}>
            <EditRows>
              <EditRow>
                <EditIcon>
                  <svg width="17" height="19" viewBox="0 0 17 19"><path d="M16 4V1H1l8 8-8 9h15v-3" fill="none" stroke="#333" strokeWidth="1.300" /></svg>
                </EditIcon>
                AutoSum
                <ChevronGap $ml={13}><Chevron /></ChevronGap>
              </EditRow>
              <EditRow>
                <EditIcon>
                  <svg width="20" height="18" viewBox="0 0 20 18">
                    <rect x=".7" y=".7" width="18.600" height="16.600" fill="#f4f6f8" stroke="#222" strokeWidth="1.300" />
                    <path d="M1 3.500h18" stroke="#222" />
                    <path d="M10 6v9M7 12l3 3 3-3" fill="none" stroke="#3b74bd" strokeWidth="1.300" />
                  </svg>
                </EditIcon>
                Fill <Chevron />
              </EditRow>
              <EditRow>
                <EditIcon>
                  <svg width="20" height="18" viewBox="0 0 20 18">
                    <path d="M1 12L11 1l8 6-10 10z" fill="#fff" stroke="#8a3c9c" strokeWidth="1.300" />
                    <path d="M1 12l5-6 8 6-5 5z" fill="#b05cc4" stroke="#8a3c9c" />
                  </svg>
                </EditIcon>
                Clear <Chevron />
              </EditRow>
            </EditRows>
          </GroupBody>
          <GroupFooter><GroupName $inset={104}>Editing</GroupName></GroupFooter>
        </Group>
      </Groups>
    </Ribbon>

    <FormulaBar>
      <FieldBox $w={127}>
        <NameText>I8</NameText>
        <svg width="9" height="5" viewBox="0 0 9 5" style={{ marginRight: 8 }}><path d="M0 0h9L4.500 5z" fill="#444" /></svg>
      </FieldBox>
      <GripDots><i /><i /><i /></GripDots>
      <FieldBox $w={137}>
        <FxButton>
          <svg width="16" height="16" viewBox="0 0 16 16"><path d="M1 1l14 14M15 1L1 15" stroke="#8a8a8a" strokeWidth="2" /></svg>
        </FxButton>
        <FxButton>
          <svg width="18" height="16" viewBox="0 0 18 16"><path d="M1 8l6 6L17 2" fill="none" stroke="#8a8a8a" strokeWidth="2.500" /></svg>
        </FxButton>
        <FxButton><FxGlyph>fx</FxGlyph></FxButton>
      </FieldBox>
      <FieldBox $w={1260} $ml={3}><FormulaText>-250000</FormulaText></FieldBox>
    </FormulaBar>

    <SheetGrid>
      <Corner>
        <svg width="15" height="15" viewBox="0 0 15 15"><path d="M15 0v15H0z" fill="#f2f2f2" /></svg>
      </Corner>
      {colNames.map((n, i) => <ColHead key={n} $c={i + 2} $on={n === 'I'}>{n}</ColHead>)}
      {rowHeights.slice(1).map((_, r) => <RowHead key={r} $r={r + 2} $on={r === 7}>{r < 11 ? r + 1 : ''}</RowHead>)}
      {rowHeights.slice(1).map((_, r) =>
        colNames.map((_n, c) => <Cell key={`${r}-${c}`} $c={c + 2} $r={r + 2} />)
      )}
      <Filled $r={5}>1</Filled>
      <Filled $r={9}>2</Filled>
      <OutlineBox $from={4} $to={7}>A</OutlineBox>
      <OutlineBox $from={9} $to={12}>B</OutlineBox>
      <NumberCell $c={5}>-250000</NumberCell>
      <SelectedCell $c={10}>-250,000.00<FillHandle /></SelectedCell>
    </SheetGrid>

    <Dialog>
      <DialogTitle>Format Cells</DialogTitle>
      <DialogTabs>
        <DialogTab $w={82} $on>Number</DialogTab>
        {dialogTabs.map(([t, w]) => <DialogTab key={t} $w={w}>{t}</DialogTab>)}
      </DialogTabs>
      <TabPanel>
        <PanelColumns>
          <CategoryColumn>
            <FieldLabel><u>C</u>ategory:</FieldLabel>
            <ListFrame>
              <ListBody>
                {categories.map(c => <ListItem key={c} $pad={3} $on={c === 'Custom'}>{c}</ListItem>)}
              </ListBody>
              <ScrollTrack>
                <svg width="10" height="6" viewBox="0 0 10 6"><path d="M1 5l4-4 4 4" fill="none" stroke="#b0b0b0" strokeWidth="1.600" /></svg>
                <svg width="10" height="6" viewBox="0 0 10 6"><path d="M1 1l4 4 4-4" fill="none" stroke="#b0b0b0" strokeWidth="1.600" /></svg>
              </ScrollTrack>
            </ListFrame>
          </CategoryColumn>
          <TypeColumn>
            <SampleSet>
              <legend>Sample</legend>
              <div>-250,000.00</div>
            </SampleSet>
            <TypeLabel><u>T</u>ype:</TypeLabel>
            <TypeInput>#,##0.00;[Red]-#,##0.00</TypeInput>
            <TypeList>
              {formats.map((f, i) => <ListItem key={i} $pad={3} $on={i === 6}>{f}</ListItem>)}
            </TypeList>
          </TypeColumn>
        </PanelColumns>
        <HelpText>Type the number format code, using one of the existing codes as a starting point.</HelpText>
      </TabPanel>
    </Dialog>
  </Page>
);

export default App;
